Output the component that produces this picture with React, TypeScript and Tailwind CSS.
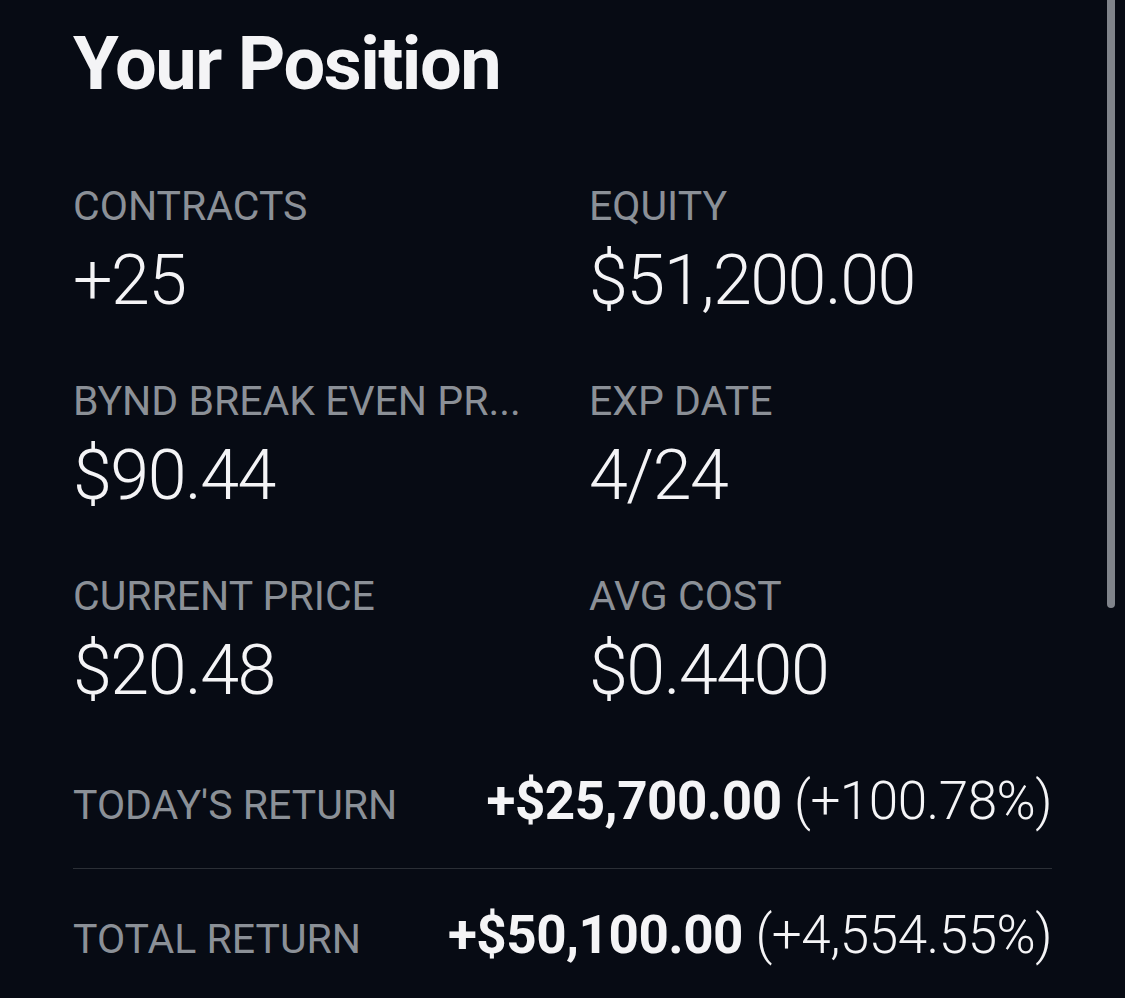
import React from "react";

const stats = [
  { label: "CONTRACTS", value: "+25" },
  { label: "EQUITY", value: "$51,200.00" },
  { label: "BYND BREAK EVEN PR...", value: "$90.44" },
  { label: "EXP DATE", value: "4/24" },
  { label: "CURRENT PRICE", value: "$20.48" },
  { label: "AVG COST", value: "$0.4400" },
];

const ReturnRow = ({ label, amount, pct }: { label: string; amount: string; pct: string }) => (
  <div className="flex items-baseline justify-between">
    <div className="text-[41px] leading-[54px] text-[#8b9097]">{label}</div>
    <div className="text-[53px] leading-[60px] text-[#f4f4f6] tracking-[-0.5px]">
      <span className="font-bold">{amount}</span>
      <span className="font-light"> {pct}</span>
    </div>
  </div>
);

export default function App() {
  return (
    <div
      className="relative min-h-[998px] w-full overflow-hidden bg-[#070b14]"
      style={{ fontFamily: "Roboto, 'Noto Sans', sans-serif" }}
    >
      <div className="pl-[73px] pr-[73px] pt-[24px]">
        <h1 className="text-[74px] leading-[80px] font-bold tracking-[-1.5px] text-[#f4f4f6]">
          Your Position
        </h1>

        <div className="mt-[78px] grid grid-cols-2 gap-x-[53px] gap-y-[58px]">
          {stats.map((s) => (
            <div key={s.label} className="min-w-0">
              <div className="whitespace-nowrap text-[41px] leading-[48px] text-[#8b9097]">{s.label}</div>
              <div className="mt-[11px] text-[70px] leading-[78px] font-light tracking-[-1.5px] text-[#f4f4f6]">
                {s.value}
              </div>
            </div>
          ))}
        </div>

        <div className="mt-[62px]">
          <ReturnRow label="TODAY'S RETURN" amount="+$25,700.00" pct="(+100.78%)" />
        </div>
        <div className="my-[36px] h-px bg-[#2b2f36]" />
        <ReturnRow label="TOTAL RETURN" amount="+$50,100.00" pct="(+4,554.55%)" />
      </div>

      <div className="absolute right-[10px] top-0 h-[608px] w-[8px] rounded-b-full bg-[#80848b]" />
    </div>
  );
}
